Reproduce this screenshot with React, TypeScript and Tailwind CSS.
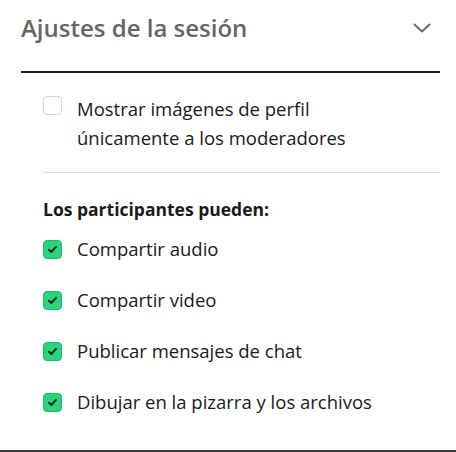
function ChevronDown() {
  return (
    <svg width="18" height="18" viewBox="0 0 18 18" fill="none">
      <path
        d="M1.5 5.5L9 12.5L16.5 5.5"
        stroke="#6b6b6b"
        strokeWidth="2"
        strokeLinecap="round"
        strokeLinejoin="round"
      />
    </svg>
  );
}

function Check({ checked }: { checked: boolean }) {
  if (!checked) {
    return (
      <span className="block w-[19px] h-[19px] shrink-0 rounded-[4px] border border-[#d4d4d4] bg-white" />
    );
  }
  return (
    <span className="w-[19px] h-[19px] shrink-0 rounded-[4px] bg-[#2bd37f] border border-[#22b96d] flex items-center justify-center">
      <svg width="11" height="11" viewBox="0 0 11 11" fill="none">
        <path
          d="M2 5.8L4.3 8L9 2.8"
          stroke="#1b2a22"
          strokeWidth="2"
          strokeLinecap="round"
          strokeLinejoin="round"
        />
      </svg>
    </span>
  );
}

const permissions = [
  "Compartir audio",
  "Compartir video",
  "Publicar mensajes de chat",
  "Dibujar en la pizarra y los archivos",
];

export default function App() {
  return (
    <div
      className="w-[456px] h-[452px] bg-white flex flex-col border-b-2 border-[#3a3a3a]"
      style={{ fontFamily: '"Open Sans", sans-serif' }}
    >
      <div className="ml-[21px] mr-[16px] h-[73px] flex items-start justify-between border-b-2 border-[#222]">
        <h2 className="mt-[11px] text-[24px] leading-[34px] text-[#666] font-semibold">
          Ajustes de la sesión
        </h2>
        <div className="mt-[19px] mr-[9px]">
          <ChevronDown />
        </div>
      </div>
      <div className="ml-[43px] mr-[16px] flex flex-col">
        <label className="mt-[22px] flex items-start gap-[15px] pb-[22px] border-b border-[#dcdcdc]">
          <span className="mt-[1px]">
            <Check checked={false} />
          </span>
          <span className="text-[18.5px] leading-[29px] -mt-[1px] -mb-[2px] text-[#1a1a1a]">
            Mostrar imágenes de perfil
            <br />
            únicamente a los moderadores
          </span>
        </label>
        <p className="mt-[24px] text-[17.5px] leading-[24px] font-bold text-[#1a1a1a]">
          Los participantes pueden:
        </p>
        <div className="mt-[14px] flex flex-col gap-[23px]">
          {permissions.map((p) => (
            <label key={p} className="flex items-center gap-[15px] h-[28px]">
              <Check checked={true} />
              <span className="text-[18.5px] leading-[28px] text-[#1a1a1a]">{p}</span>
            </label>
          ))}
        </div>
      </div>
    </div>
  );
}
